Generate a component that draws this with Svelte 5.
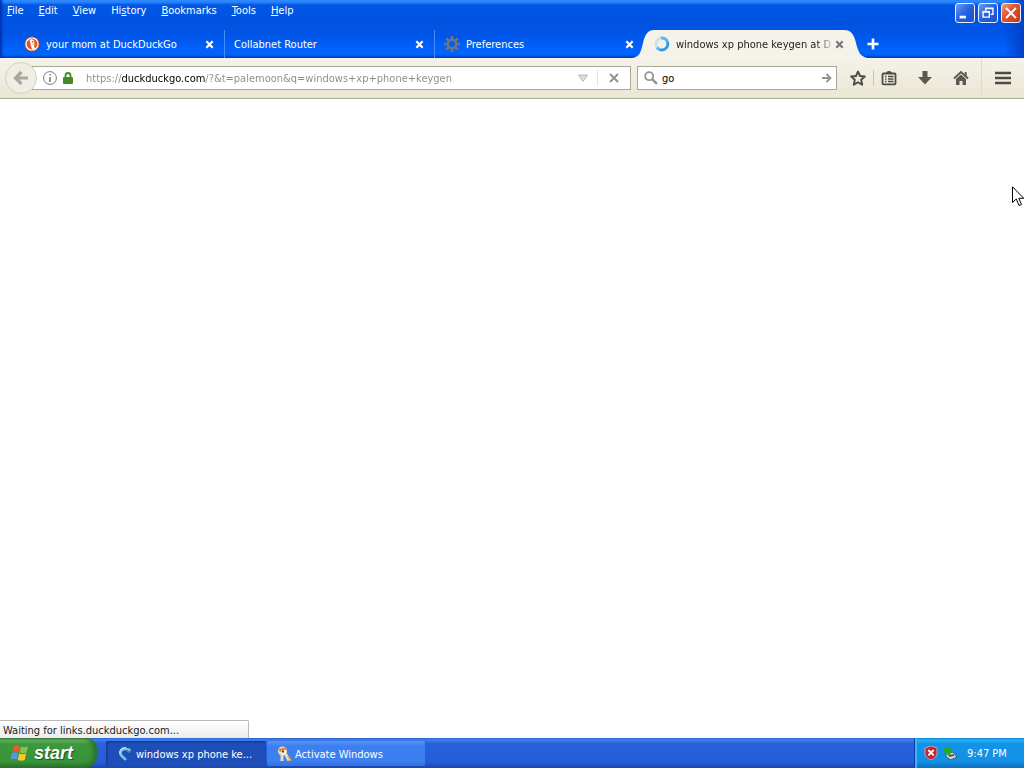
<script>
  const menus = ['File', 'Edit', 'View', 'History', 'Bookmarks', 'Tools', 'Help'];
  const accessKey = { History: 2 };
  const tabs = [
    { title: 'your mom at DuckDuckGo', icon: 'duck' },
    { title: 'Collabnet Router', icon: null },
    { title: 'Preferences', icon: 'gear' },
    { title: 'windows xp phone keygen at D', icon: 'loading', active: true }
  ];
  const parts = (m) => {
    const i = accessKey[m] ?? 0;
    return [m.slice(0, i), m[i], m.slice(i + 1)];
  };
  let url = $state('https://duckduckgo.com/?&t=palemoon&q=windows+xp+phone+keygen');
  let query = $state('go');
</script>

<div class="desktop">
  <header class="frame">
    <div class="top">
      <nav class="menus" aria-label="Menu bar">
        {#each menus as m}
          {@const p = parts(m)}
          <button class="menu">{p[0]}<u>{p[1]}</u>{p[2]}</button>
        {/each}
      </nav>
      <div class="controls">
        <button class="ctl" aria-label="Minimize"><svg viewBox="0 0 20 20"><path d="M4 13h7v3H4z" fill="#fff" /></svg></button>
        <button class="ctl" aria-label="Restore"><svg viewBox="0 0 20 20"><path d="M7.500 8V4.500h8v7H13M7 5h9M4.500 8.500h7v6h-7zM4 9h8" fill="none" stroke="#fff" stroke-width="1.500" /></svg></button>
        <button class="ctl close" aria-label="Close"><svg viewBox="0 0 20 20"><path d="M4.500 4.500l11 11M15.500 4.500L4.500 15.500" stroke="#fff" stroke-width="2.200" /></svg></button>
      </div>
    </div>
    <div class="tabs">
      {#each tabs as t}
        <div class="tab" class:active={t.active}>
          {#if t.active}
            <svg class="shape" viewBox="0 0 236 28" preserveAspectRatio="none" aria-hidden="true">
              <path d="M0 28C8 27 9 21 11 13C13 4 16 0 22 0H212C219 0 222 4 224 13C226 21 228 27 236 28Z" fill="#f4f2e9" />
            </svg>
          {/if}
          <button class="tabmain">
            {#if t.icon === 'duck'}
              <svg class="ico" viewBox="0 0 16 16"><circle cx="8" cy="8" r="7.500" fill="#e0512c" /><circle cx="8" cy="8" r="6" fill="#e0512c" stroke="#fff" stroke-width="1.200" /><path d="M5.500 4C7 2.500 10 3 10.300 6L10 9l1 4.500H8L6.500 8z" fill="#fff" /><path d="M8.500 7.500h3v1.500h-3z" fill="#f8b62b" /><circle cx="8.500" cy="5.800" r=".7" fill="#345" /></svg>
            {:else if t.icon === 'gear'}
              <svg class="ico" viewBox="0 0 16 16"><circle cx="8" cy="8" r="4.200" fill="none" stroke="#6d7680" stroke-width="2.600" /><path d="M8 0v3M8 13v3M0 8h3M13 8h3M2.300 2.300l2 2M11.700 11.700l2 2M13.700 2.300l-2 2M4.300 11.700l-2 2" stroke="#6d7680" stroke-width="2.600" /></svg>
            {:else if t.icon === 'loading'}
              <svg class="ico" viewBox="0 0 16 16"><circle cx="8" cy="8" r="6" fill="none" stroke="#c9e2f2" stroke-width="3" /><path d="M7 2A6 6 0 1 1 3 11.500" fill="none" stroke="#62b6ea" stroke-width="3" /><path d="M13.500 6A6 6 0 0 1 6 13.600" fill="none" stroke="#3290da" stroke-width="2" /></svg>
            {/if}
            <span class="label">{t.title}</span>
          </button>
          <button class="x" aria-label="Close tab"><svg viewBox="0 0 10 10"><path d="M1.500 1.500l7 7M8.500 1.500l-7 7" stroke="currentColor" stroke-width="2.400" /></svg></button>
        </div>
      {/each}
      <button class="new" aria-label="New tab"><svg viewBox="0 0 12 12"><path d="M6 .5v11M.5 6h11" stroke="#fff" stroke-width="2.600" /></svg></button>
    </div>
  </header>

  <div class="toolbar">
    <button class="back" aria-label="Back"><svg viewBox="0 0 16 16"><path d="M8.500 2L2.500 8l6 6M3 8h12" fill="none" stroke="#a9a7a0" stroke-width="3.200" /></svg></button>
    <div class="field url">
      <button class="plain" aria-label="Site information"><svg class="i14" viewBox="0 0 14 14"><circle cx="7" cy="7" r="6.400" fill="none" stroke="#77777b" /><path d="M6.300 3h1.500v1.600H6.300zM6.300 6h1.500v5H6.300z" fill="#77777b" /></svg></button>
      <svg class="lock" viewBox="0 0 10 12"><path d="M2.500 6V3.500a2.500 2.500 0 0 1 5 0V6" fill="none" stroke="#458b25" stroke-width="1.800" /><rect y="5" width="10" height="7" rx="1" fill="#458b25" /></svg>
      <input class="address" aria-label="Address" bind:value={url} spellcheck="false" />
      <button class="plain" aria-label="Show history"><svg class="i10" viewBox="0 0 10 10"><path d="M.5 2h9L5 8.500z" fill="#ddddda" stroke="#b8b8b4" /></svg></button>
      <i class="thin"></i>
      <button class="plain stop" aria-label="Stop"><svg class="i10" viewBox="0 0 10 10"><path d="M1 1l8 8M9 1L1 9" stroke="#929292" stroke-width="2" /></svg></button>
    </div>
    <div class="field search">
      <svg class="i14" viewBox="0 0 14 14"><circle cx="5.200" cy="5.200" r="4" fill="none" stroke="#929292" stroke-width="1.800" /><path d="M8.300 8.300l4.700 4.500" stroke="#929292" stroke-width="2.400" /></svg>
      <input aria-label="Search" bind:value={query} />
      <button class="plain" aria-label="Go"><svg class="i10" viewBox="0 0 10 10"><path d="M0 5h8M4.500 1l4 4-4 4" fill="none" stroke="#929292" stroke-width="1.800" /></svg></button>
    </div>
    <div class="tools">
      <button class="tool star" aria-label="Bookmark"><svg viewBox="0 0 16 16"><path d="M8 1.500l2 4.500 4.800.5-3.600 3.300 1 4.900L8 12.200l-4.200 2.500 1-4.900L1.200 6.500 6 6z" fill="none" stroke="#4c4b45" stroke-width="1.900" stroke-linejoin="round" /></svg></button>
      <i class="sep"></i>
      <button class="tool" aria-label="Bookmarks list"><svg viewBox="0 0 16 16"><rect x="1.500" y="3.500" width="13" height="10.800" rx="1" fill="none" stroke="#4c4b45" stroke-width="1.800" /><path d="M5 4c0-2 1-3 3-3s3 1 3 3z" fill="#4c4b45" /><path d="M4 6.500h1.500M7 6.500h5.500M4 9h1.500M7 9h5.500M4 11.500h1.500M7 11.500h5.500" stroke="#4c4b45" stroke-width="1.300" /></svg></button>
      <button class="tool" aria-label="Downloads"><svg viewBox="0 0 16 16"><path d="M5.500 1h5v6H15l-7 7.500L1 7h4.500z" fill="#5a5952" /></svg></button>
      <button class="tool" aria-label="Home"><svg viewBox="0 0 16 16"><path d="M1 8.500l7-6.500 7 6.500M12.700 2v4" fill="none" stroke="#5a5952" stroke-width="1.900" /><path d="M3 9l5-4.500L13 9v6H9.500v-4h-3v4H3z" fill="#5a5952" /></svg></button>
      <button class="tool hamburger" aria-label="Menu"><svg viewBox="0 0 16 16"><path d="M0 3h16M0 8h16M0 13h16" stroke="#4c4b45" stroke-width="2.600" /></svg></button>
    </div>
  </div>

  <main class="page">
    <div class="status" role="status">Waiting for links.duckduckgo.com...</div>
  </main>

  <footer class="taskbar">
    <button class="start">
      <svg class="flag" viewBox="0 0 20 20"><path d="M4 3c2-1 4-1 6 0L8.500 9c-2-1-4-1-6 0z" fill="#e95c2c" /><path d="M11 3.500c2 1 4 1 7 0L16.500 9.500c-2 1-4 1-7 0z" fill="#8bc34a" /><path d="M2 10c2-1 4-1 6.200 0L6.700 16.500c-2-1-4-1-6.200 0z" fill="#5b95ea" /><path d="M9.200 10.500c2 1 4 1 7 0L14.700 17c-2 1-4 1-7 0z" fill="#fbc92f" /></svg>
      <span>start</span>
    </button>
    <div class="tasks">
      <button class="task current">
        <svg class="ico" viewBox="0 0 16 16"><path d="M13.500 4.500C10 2 4.500 2.500 3.500 6.500c-.8 3 2.500 4 5.500 7.500" fill="none" stroke="#6cc8dc" stroke-width="2.600" /><path d="M3.200 8C2 5 4 1.500 9 1.800" fill="none" stroke="#b4e3e9" stroke-width="1.400" /><path d="M9 5l5 .5-2 1.500z" fill="#3f93bd" /></svg>
        <span>windows xp phone ke...</span>
      </button>
      <button class="task">
        <svg class="ico" viewBox="0 0 16 16"><circle cx="6.500" cy="5" r="4.500" fill="#f5dfaa" /><path d="M2 3l8-2 1 3-7 2z" fill="#eb8743" /><path d="M5 5l5-1v4L7 9z" fill="#fff" /><path d="M6 9v6M9 7l4 7.500" stroke="#e9dfbd" stroke-width="3" /><path d="M12 10l3 5" stroke="#e6ae2d" stroke-width="1.500" /><circle cx="7" cy="5.500" r="1.200" fill="#4c4f66" /></svg>
        <span>Activate Windows</span>
      </button>
    </div>
    <div class="tray">
      <svg class="i14" viewBox="0 0 14 14"><path d="M7 0l6 2v5c0 3-2 5-6 7C3 12 1 10 1 7V2z" fill="#c5222f" stroke="#b8a9ad" /><path d="M4.300 4l5.400 5.400M9.700 4L4.300 9.400" stroke="#fff" stroke-width="1.900" /></svg>
      <svg class="i14" viewBox="0 0 14 14"><path d="M3 7l7-1 4 5-6 3-5-3z" fill="#c7d3cf" stroke="#42576b" /><path d="M1 1l7 1v5l-2 3-5-4z" fill="#23a930" /><path d="M6 10l5-1" stroke="#31465c" stroke-width="1.500" /></svg>
      <time>9:47 PM</time>
    </div>
  </footer>

  <svg class="cursor" viewBox="0 0 12 21" aria-hidden="true"><path d="M.5.800V16.500l3.800-3.500 2.700 6.500 2.500-1-2.700-6.200h5z" fill="#fff" stroke="#000" /></svg>
</div>

<style>
  :global(body) { margin: 0; background: #fff; overflow: hidden; }
  .desktop {
    position: relative; display: flex; flex-direction: column; min-height: 100vh; overflow: hidden;
    font-family: "DejaVu Sans Condensed", "DejaVu Sans", sans-serif; font-size: 11px; line-height: 16px; color: #000;
  }
  button { font: inherit; color: inherit; background: none; border: 0; padding: 0; margin: 0; }
  input { font: inherit; border: 0; padding: 2px 0 0; background: none; outline: 0; min-width: 0; flex: 1; }
  svg { display: block; flex: none; }
  .frame {
    color: #fff; display: flex; flex-direction: column;
    background:
      linear-gradient(to right, #0030b0, transparent 4px),
      linear-gradient(to left, #0040c8, transparent 20px),
      linear-gradient(#2a8aff 0, #2a86fb 2px, #0058e6 5px, #0052e0 24px, #0057ec 38px, #0064fc 50px, #0062fa 55px, #0038a8 58px);
  }
  .top { display: flex; justify-content: space-between; height: 30px; }
  .menus { display: flex; gap: 15px; padding: 3px 7px; align-items: flex-start; }
  .menu { white-space: nowrap; }
  .controls { display: flex; gap: 3px; padding: 3px 3px 0 0; align-items: flex-start; }
  .ctl { box-sizing: border-box; width: 20px; height: 20px; border: 1px solid #e8efff; border-radius: 3px; background: linear-gradient(135deg, #6c9cf2, #2460df 50%, #1e50cf); }
  .ctl svg { width: 18px; height: 18px; }
  .ctl.close { background: linear-gradient(135deg, #f09a78, #e2502a 45%, #c93a14); }
  .tabs { display: flex; height: 28px; padding-left: 15px; }
  .tab { position: relative; flex: 0 1 210px; min-width: 0; box-sizing: border-box; display: flex; align-items: center; padding: 0 10px 0 9px; border-right: 1px solid #4590ff; }
  .tab:nth-child(n + 3) { border-color: transparent; }
  .shape { position: absolute; left: -13px; top: 0; width: calc(100% + 27px); height: 28px; }
  .tabmain { position: relative; display: flex; align-items: center; gap: 6px; flex: 1; min-width: 0; }
  .ico { width: 16px; height: 16px; }
  .label { flex: 1; min-width: 0; padding-top: 2px; text-align: left; overflow: hidden; white-space: nowrap; }
  .active .label { color: #222; mask-image: linear-gradient(to left, transparent, #000 18px); }
  .x { position: relative; color: #fff; }
  .active .x { color: #77767a; }
  .x svg { width: 9px; height: 9px; }
  .new { margin-left: 12px; }
  .new svg { width: 12px; height: 12px; }

  .toolbar { display: flex; align-items: center; height: 40px; background: linear-gradient(#f4f2e9, #ebe7d5); border-bottom: 1px solid #aaa797; }
  .back { position: relative; z-index: 1; display: grid; place-items: center; box-sizing: border-box; width: 32px; height: 32px; margin-left: 5px; border: 1px solid #d4d1c4; border-radius: 50%; background: #f0eee3; flex: none; }
  .back svg { width: 16px; height: 16px; }
  .field { box-sizing: border-box; height: 24px; display: flex; align-items: center; background: #fff; border: 1px solid #aaa899; }
  .url { flex: 1; min-width: 0; margin-left: -5px; padding: 0 11px 0 10px; }
  .lock { width: 10px; height: 12px; margin: 0 13px 0 6px; }
  .address {
    color: transparent; caret-color: #000;
    background: linear-gradient(to right, #8a8a8a 36px, #000 36px, #000 119px, #8a8a8a 119px);
    background-clip: text; -webkit-background-clip: text;
  }
  .i14 { width: 14px; height: 14px; }
  .i10 { width: 10px; height: 10px; }
  .thin { width: 1px; height: 16px; background: #e6e5e0; margin: 0 11px 0 9px; }
  .search { width: 200px; margin-left: 6px; padding: 0 4px 0 6px; gap: 4px; }
  .tools { display: flex; align-items: center; align-self: stretch; }
  .tool { width: 36px; display: grid; place-items: center; }
  .tool svg { width: 16px; height: 16px; }
  .tool.star { width: 30px; margin-left: 6px; }
  .sep { width: 1px; height: 16px; background: #c9c6b8; margin-right: -3px; }
  .hamburger { width: 43px; margin-left: 2px; align-self: stretch; border-left: 1px solid #dedbcd; }

  .page { flex: 1; display: flex; align-items: flex-end; background: #fff; }
  .status { box-sizing: border-box; width: 249px; height: 18px; padding: 2px 3px 0; border: 1px solid #b9b9b9; border-left: 0; border-bottom: 0; background: linear-gradient(#fff, #ececec); border-top-right-radius: 2px; color: #222; white-space: nowrap; }

  .taskbar { display: flex; height: 30px; color: #fff; background: linear-gradient(#2d66cc 0, #3b80ee 2px, #2a62dc 5px, #245ddb 24px, #1b45ae 30px); }
  .start {
    display: flex; align-items: center; gap: 4px; width: 97px; padding-left: 10px; box-sizing: border-box;
    border-radius: 0 10px 12px 0; background: linear-gradient(#3c7f3b 0, #68b468 2px, #3d983d 6px, #389438 24px, #2a6b2a 30px); box-shadow: inset -4px 0 5px #2b702b;
    font: italic bold 18px/26px "Liberation Sans", sans-serif; text-shadow: 1px 1px 1px #244d24;
  }
  .flag { width: 20px; height: 20px; }
  .tasks { display: flex; flex: 1; min-width: 0; padding: 3px 0 2px 9px; gap: 1px; }
  .task { display: flex; align-items: center; gap: 3px; flex: 0 1 158px; min-width: 0; padding: 0 0 0 9px; box-sizing: border-box; border-radius: 2px; background: linear-gradient(#5795f8, #3c7ff0 5px, #3c7ff0 20px, #3572e2); white-space: nowrap; }
  .task.current { background: #1e4fb9; box-shadow: inset 1px 1px 2px #123583; flex-basis: 160px; padding-left: 11px; }
  .task span, .tray time { padding-top: 2px; }
  .tray { display: flex; align-items: center; gap: 5px; box-sizing: border-box; width: 110px; padding-left: 9px; border-left: 1px solid #0b3c9c; background: linear-gradient(#0f7bd2 0, #22b3f5 2px, #1292e8 6px, #1290e6 24px, #0d68b8 30px); box-shadow: inset 2px 0 1px #38b8f8; }
  .tray time { margin-left: 5px; white-space: nowrap; }
  .cursor { position: absolute; left: 1012px; top: 186px; width: 12px; height: 21px; }
</style>
